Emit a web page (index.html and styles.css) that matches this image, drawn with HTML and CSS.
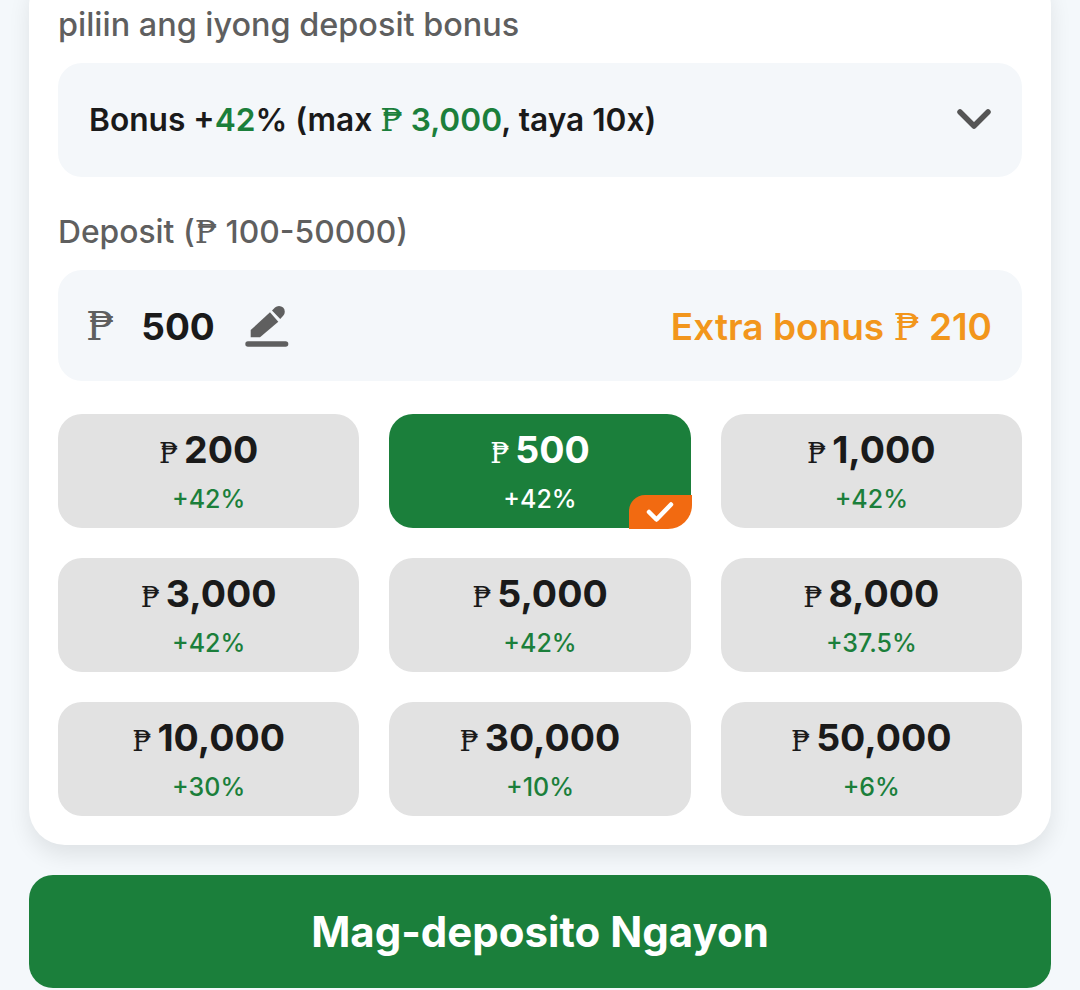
FILE: index.html
```html
<!DOCTYPE html>
<html lang="tl">
<head>
<meta charset="utf-8">
<title>Deposit</title>
<link rel="stylesheet" href="styles.css">
</head>
<body>
<main class="page">
  <section class="card">
    <div class="label">piliin ang iyong deposit bonus</div>
    <div class="field select">
      <span class="select-text">Bonus +<b class="green">42</b>% (max <b class="green"><span class="peso">₱</span> 3,000</b>, taya 10x)</span>
      <svg class="chev" width="34" height="24" viewBox="0 0 34 24"><path d="M3 4 L17 18 L31 4" fill="none" stroke="#555" stroke-width="5.500" stroke-linecap="round" stroke-linejoin="round"/></svg>
    </div>
    <div class="label label-2">Deposit (<span class="peso">₱</span> 100-50000)</div>
    <div class="field amount">
      <span class="peso cur">₱</span>
      <span class="value">500</span>
      <svg class="pencil" width="44" height="44" viewBox="0 0 44 44"><path d="M27 6.500 l3 -3 a5.800 5.800 0 0 1 8.200 8.200 l-3 3.300z" fill="#5f5f5f"/><path d="M5.700 26 L25 8.300 L33.300 17.700 L15 33.300 H5.700z" fill="#5f5f5f"/><rect x="0.300" y="37.300" width="43" height="5.400" rx="2.700" fill="#5f5f5f"/></svg>
      <span class="extra">Extra bonus <span class="peso">₱</span> 210</span>
    </div>
    <div class="grid">
      <div class="opt"><div class="amt"><span class="peso">₱</span>200</div><div class="pct">+42%</div></div>
      <div class="opt on"><div class="amt"><span class="peso">₱</span>500</div><div class="pct">+42%</div>
        <span class="chip"><svg width="28" height="22" viewBox="0 0 28 22"><path d="M3 11 L10.500 18.500 L25 3.500" fill="none" stroke="#fff" stroke-width="4.500" stroke-linecap="round" stroke-linejoin="round"/></svg></span></div>
      <div class="opt"><div class="amt"><span class="peso">₱</span>1,000</div><div class="pct">+42%</div></div>
      <div class="opt"><div class="amt"><span class="peso">₱</span>3,000</div><div class="pct">+42%</div></div>
      <div class="opt"><div class="amt"><span class="peso">₱</span>5,000</div><div class="pct">+42%</div></div>
      <div class="opt"><div class="amt"><span class="peso">₱</span>8,000</div><div class="pct">+37.5%</div></div>
      <div class="opt"><div class="amt"><span class="peso">₱</span>10,000</div><div class="pct">+30%</div></div>
      <div class="opt"><div class="amt"><span class="peso">₱</span>30,000</div><div class="pct">+10%</div></div>
      <div class="opt"><div class="amt"><span class="peso">₱</span>50,000</div><div class="pct">+6%</div></div>
    </div>
  </section>
  <button class="cta">Mag-deposito Ngayon</button>
</main>
</body>
</html>
```
FILE: styles.css
```css
* { box-sizing: border-box; }
html, body { margin: 0; height: 990px; overflow: hidden; background: #f4f8fb; }
body { font-family: "Inter", "Lato", sans-serif; color: #1a1a1a; }
.page { padding: 0 29px; }
.card {
  margin-top: -30px;
  padding: 30px 29px 29px;
  background: #fff;
  border-radius: 36px;
  box-shadow: 0 10px 22px rgba(0, 0, 0, .09);
}
.label { font-size: 32.4px; font-weight: 500; line-height: 50px; color: #5f5f5f; height: 63px; }
.label-2 { margin-top: 30px; height: 63px; line-height: 50px; font-size: 31.8px; }
.peso { font-family: "DejaVu Serif", serif; font-weight: 400; }
.green { color: #1b7f3b; font-weight: 600; }
.field { display: flex; align-items: center; background: #f4f7fa; border-radius: 24px; padding: 0 31px; }
.select { height: 114px; justify-content: space-between; font-size: 31.7px; font-weight: 600; }
.select-text { margin-top: -2px; }
.amount { height: 111px; }
.cur { font-size: 40px; color: #5f5f5f; margin-left: -3px; }
.value { margin-left: 27px; font-size: 37px; font-weight: 700; padding-top: 1px; }
.pencil { margin-left: 30px; }
.extra { margin-left: auto; margin-right: -1px; font-size: 37px; font-weight: 600; color: #f2961c; padding-top: 1px; }
.grid { margin-top: 33px; display: grid; grid-template-columns: repeat(3, 1fr); gap: 30px 30px; }
.opt {
  position: relative;
  height: 114px;
  background: #e2e2e2;
  border-radius: 24px;
  display: flex; flex-direction: column; align-items: center;
  padding-top: 13px;
}
.amt { font-size: 37.5px; font-weight: 700; line-height: 46px; }
.amt .peso { font-size: 27px; margin-right: 6px; }
.pct { font-size: 25px; font-weight: 500; line-height: 32px; margin-top: 6px; color: #1b7f3b; }
.on { background: #1b7f3b; }
.on .amt, .on .pct { color: #fff; }
.chip {
  position: absolute; right: -1px; bottom: -1px;
  width: 63px; height: 34px;
  background: #f26a11;
  border-radius: 16px 0 24px 0;
  display: flex; align-items: center; justify-content: center;
}
.cta {
  display: block; width: 100%; height: 113px; margin-top: 30px;
  border: 0; border-radius: 24px; background: #1b7f3b; color: #fff;
  font-family: inherit; font-size: 42px; font-weight: 700;
}
```
